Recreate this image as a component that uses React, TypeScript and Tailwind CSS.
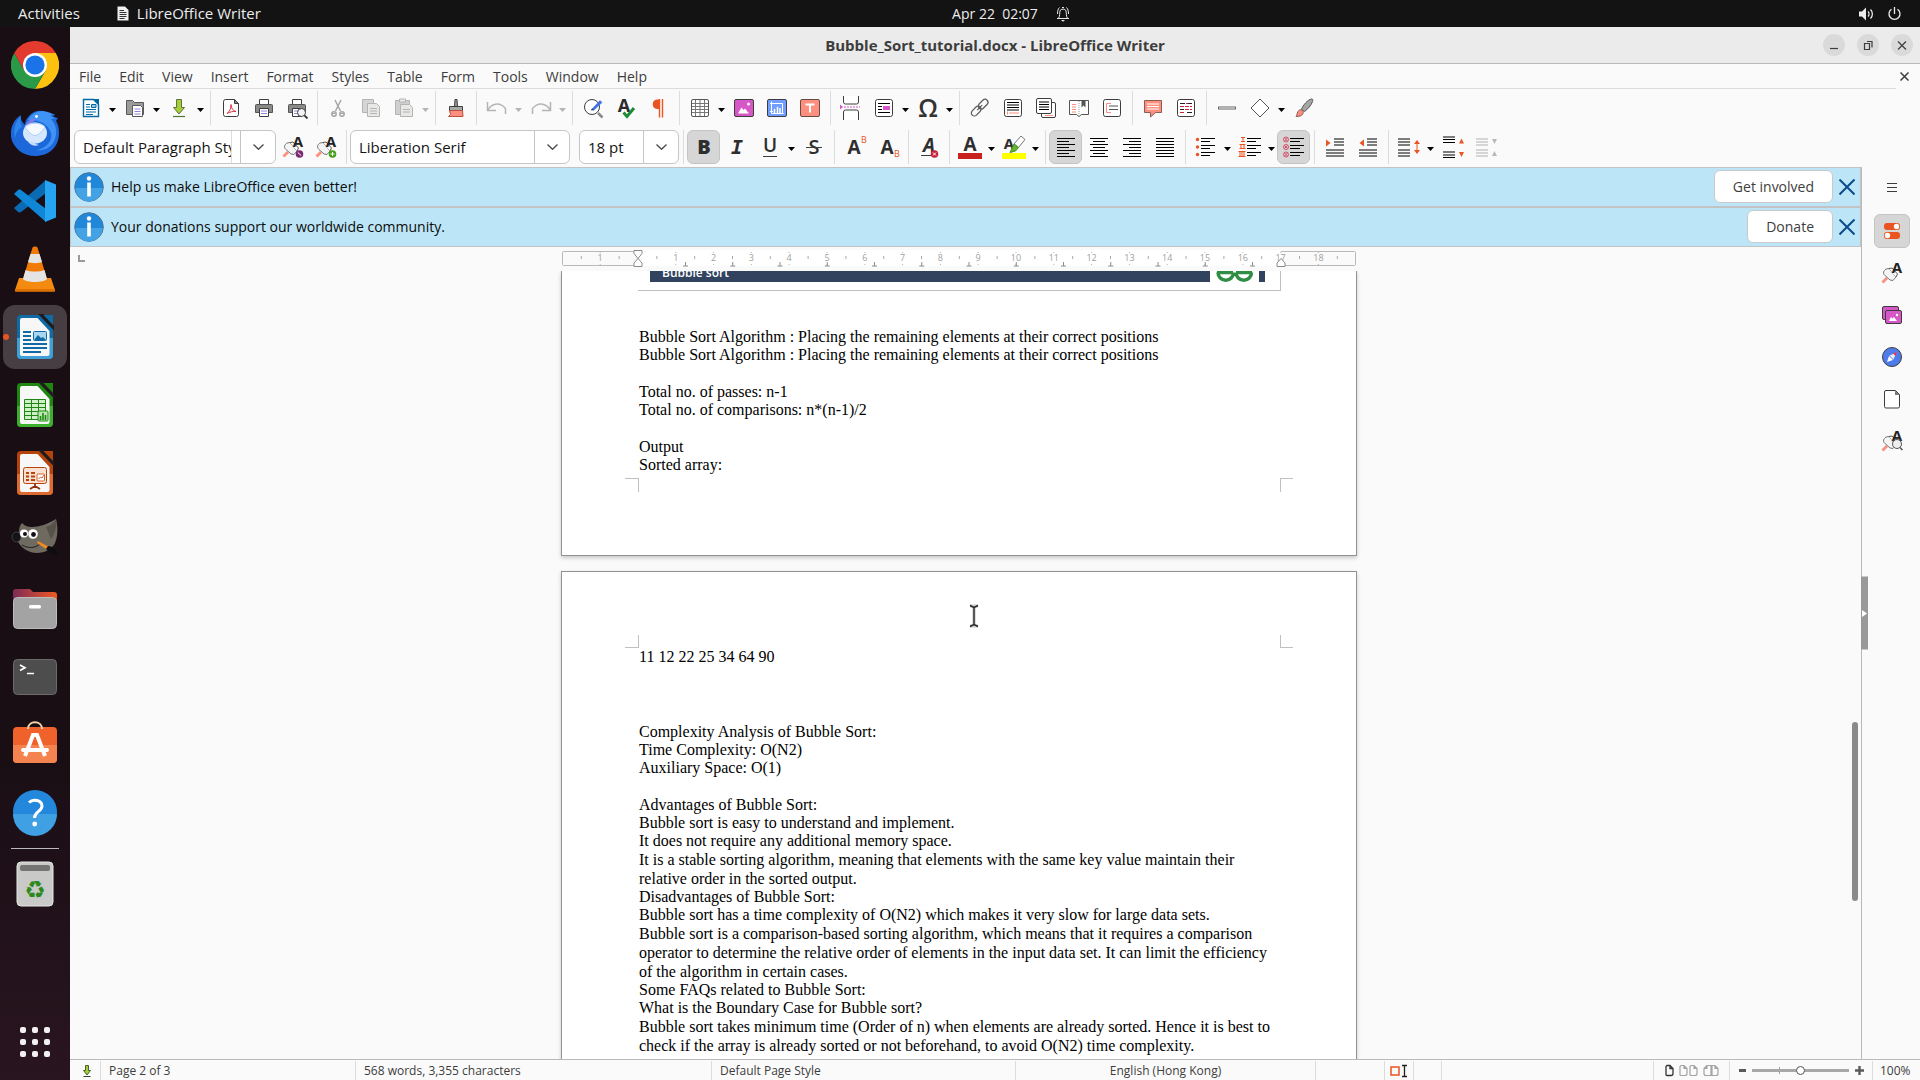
import { useState, type ReactNode } from "react";

const INK = "#3d3d3d";
const ORANGE = "#e95420";
const SALMON = "#fc8f7e";
const MAGENTA = "#d658c8";

function Glyph({ children, size = 24 }: { children: ReactNode; size?: number }) {
  return (
    <svg width={size} height={size} viewBox="0 0 24 24" fill="none" stroke={INK} className="overflow-visible" aria-hidden="true">
      {children}
    </svg>
  );
}

/* ---------- toolbar building blocks ---------- */

interface ToolProps {
  label: string;
  children: ReactNode;
  arrow?: boolean;
  active?: boolean;
  disabled?: boolean;
}

function Tool({ label, children, arrow, active, disabled }: ToolProps) {
  return (
    <div className="flex shrink-0">
      <button
        type="button"
        aria-label={label}
        aria-pressed={active}
        disabled={disabled}
        className={
          active
            ? "flex h-[34px] w-[33px] items-center justify-center rounded-md border border-[#c4c4c4] bg-[#d6d6d6]"
            : "flex h-[34px] w-[33px] items-center justify-center rounded-md"
        }
      >
        {children}
      </button>
      {arrow && (
        <button type="button" aria-label={`${label} options`} disabled={disabled} className="flex h-[34px] w-[11px] items-center justify-center pt-1">
          <svg width="7" height="4" viewBox="0 0 7 4" aria-hidden="true">
            <path d="M0 0h7L3.500 4z" fill={disabled ? "#b5b5b5" : "#000"} />
          </svg>
        </button>
      )}
    </div>
  );
}

function Sep() {
  return (
    <div className="flex w-2 shrink-0 justify-center">
      <div className="h-[34px] w-px bg-[#dcdcdc]" />
    </div>
  );
}

function Combo({ label, options, frame, pad, split }: { label: string; options: string[]; frame: string; pad: string; split?: boolean }) {
  return (
    <div className={`relative flex h-[34px] shrink-0 overflow-hidden rounded-md border border-[#c6c6c6] bg-white ${frame}`}>
      <select aria-label={label} className={`w-full appearance-none overflow-hidden bg-transparent pl-2 text-[15px] text-[#141414] outline-none ${pad}`}>
        {options.map((o) => (
          <option key={o}>{o}</option>
        ))}
      </select>
      {split && <div className="pointer-events-none absolute inset-y-0 right-[43px] w-px bg-[#dcdcdc]" />}
      <div className="pointer-events-none absolute inset-y-0 right-0 flex w-[35px] items-center justify-center border-l border-[#c6c6c6]">
        <svg width="11" height="6" viewBox="0 0 11 6" fill="none" stroke="#4a4a4a" aria-hidden="true">
          <path d="M.5.5 5.500 5.300 10.500.5" strokeWidth="1.300" />
        </svg>
      </div>
    </div>
  );
}

/* ---------- standard toolbar icons ---------- */

const NewDoc = () => (
  <Glyph>
    <path d="M4.500 3.500h10l5 5v12h-15z" fill="#fff" stroke="#0369a3" strokeWidth="1.400" />
    <path d="M14 3h6v6z" fill="#0369a3" stroke="none" />
    <path d="M7 8.500h4M7 11h4M7 13.500h10M7 16h10M7 18.500h7" stroke="#0369a3" />
    <path d="M12.500 8.500h4.500v3h-4.500z" fill="#8ecae6" stroke="#0369a3" />
  </Glyph>
);
const OpenDoc = () => (
  <Glyph>
    <path d="M3.500 18.500v-14h6l2 2h9v12z" fill="#9b9b99" stroke="#5a5a58" />
    <path d="M9.500 9.500h8l2 2v9h-10z" fill="#fff" stroke="#5a5a58" />
    <path d="M11.500 13h6M11.500 15.500h6M11.500 18h6" stroke="#8d86e0" />
  </Glyph>
);
const SaveDoc = () => (
  <Glyph>
    <path d="M9.500 3.500h5v8h3L12 18l-5.500-6.500h3z" fill="#a3cf3b" stroke="#63703c" />
    <path d="M6 20.500h12" stroke="#4f7a2a" strokeWidth="1.200" />
  </Glyph>
);
const PdfDoc = () => (
  <Glyph>
    <path d="M6.500 3.500h9l4 4v11a2 2 0 0 1-2 2h-11a2 2 0 0 1-2-2v-13a2 2 0 0 1 2-2z" fill="#fff" />
    <path d="M15.500 3.500v4h4z" fill="#8a8a8a" />
    <path d="M8 17.500c3-2 4-5.500 4-9M12 8.500c0 4 2.500 6.500 5 7-3-.5-6 .5-9 2" stroke="#dc2e3d" />
  </Glyph>
);
const Printer = ({ children }: { children?: ReactNode }) => (
  <Glyph>
    <path d="M7.500 8V3.500h9V8" fill="#fff" />
    <path d="M4.500 8.500h15a1 1 0 0 1 1 1v7h-17v-7a1 1 0 0 1 1-1z" fill="#8a8a88" stroke="#555" />
    <path d="M7.500 12.500h9v8h-9z" fill="#fff" />
    <path d="M9 15h6M9 17.500h6" stroke="#8d86e0" />
    {children}
  </Glyph>
);
const Cut = () => (
  <Glyph>
    <g stroke="#a6a6a4" strokeWidth="1.500">
      <path d="M9 4l5.500 11M15 4L9.500 15" />
      <path d="M5.500 17.500h4M14.500 17.500h4" strokeWidth="1" />
      <circle cx="8" cy="18" r="2.200" />
      <circle cx="16" cy="18" r="2.200" />
    </g>
  </Glyph>
);
const Copy = () => (
  <Glyph>
    <g stroke="#b4b4b2" fill="#e8e8e6">
      <path d="M3.500 3.500h11v13h-11z" fill="#d5d5d3" />
      <path d="M8.500 7.500h9l3 3v10h-12z" />
      <path d="M11 12.500h7M11 15h7M11 17.500h7" />
    </g>
  </Glyph>
);
const Paste = () => (
  <Glyph>
    <g stroke="#b4b4b2" fill="#e8e8e6">
      <path d="M3.500 4.500h14v14h-14z" fill="#cfcfcd" />
      <path d="M7.500 3h6v3h-6z" />
      <path d="M8.500 8.500h9l3 3v9h-12z" />
      <path d="M11 13.500h7M11 16h7" />
    </g>
  </Glyph>
);
const CloneFormat = () => (
  <Glyph>
    <path d="M10.500 10.500l.5-7h2l.5 7z" fill="#999" />
    <path d="M5.500 10.500h13v4h-13z" fill="#a8a8a6" />
    <path d="M5.500 14.500h13l.5 6H4.500l2-2z" fill={SALMON} stroke="#b6503f" />
  </Glyph>
);
const Undo = ({ flip }: { flip?: boolean }) => (
  <svg width="24" height="24" viewBox="0 0 24 24" fill="none" stroke="#b5b5b3" strokeWidth="1.500" className={flip ? "-scale-x-100" : ""} aria-hidden="true">
    <path d="M2.500 6v8.500h8.500M3 14C6 8 14 5 20.500 12.500V18" />
  </svg>
);
const Find = () => (
  <Glyph>
    <circle cx="11" cy="11" r="7.500" fill="#fff" />
    <path d="M17 17l4.500 4.500" strokeWidth="2.500" stroke="#8a8a8a" />
    <path d="M10.500 13.500L19 4.500l2 2-8.500 8z" fill="#3f6fe0" stroke="#3f6fe0" strokeWidth=".5" />
    <path d="M10 14.500l1-2 1.200 1.200z" fill="#222" stroke="none" />
  </Glyph>
);
const Spelling = () => (
  <Glyph>
    <text x="10" y="16" textAnchor="middle" fontSize="18" fontWeight="700" fontFamily="Open Sans" fill="#2b2b2b" stroke="none">A</text>
    <path d="M9.500 16.500l3.500 4 7-8.500" stroke="#1c8b36" strokeWidth="3" />
  </Glyph>
);
const Pilcrow = () => (
  <Glyph>
    <path d="M12.500 3.500h-2.500a5 4.800 0 0 0 0 9.500h2.500z" fill={ORANGE} stroke="none" />
    <path d="M12.500 3v18.500M15.500 3v18.500" stroke={ORANGE} strokeWidth="1.400" />
  </Glyph>
);
const TableIcon = () => (
  <Glyph>
    <rect x="3.500" y="3.500" width="17" height="17" rx="1.500" fill="#fff" stroke="#555" />
    <path d="M4 7.500h16M4 10.500h16M4 13.500h16M4 16.500h16M7.500 4v16M12 4v16M16.500 4v16" stroke="#777" />
  </Glyph>
);
const ImageIcon = () => (
  <Glyph>
    <rect x="2.500" y="3.500" width="19" height="17" rx="1.500" fill={MAGENTA} />
    <path d="M6 17.500l3.500-6 2 2.500 1.500-1.500 4 5z" fill="#fff" stroke="none" />
    <circle cx="16.500" cy="8" r="1.500" fill="#fff" stroke="none" />
  </Glyph>
);
const ChartIcon = () => (
  <Glyph>
    <rect x="2.500" y="3.500" width="19" height="17" rx="1.500" fill="#729fff" />
    <path d="M6.500 5.500v12h12M5 7.500h12.500v10M5 15.500h3" stroke="#fff" />
    <path d="M9.500 17v-4M12.500 17v-6M15 17v-5" stroke="#fff" strokeWidth="1.500" />
  </Glyph>
);
const TextBoxIcon = () => (
  <Glyph>
    <rect x="2.500" y="3.500" width="19" height="17" rx="1.500" fill={SALMON} stroke="#6a4a45" />
    <path d="M7.500 8.500h9M12 9v7.500" stroke="#fff" strokeWidth="2" />
  </Glyph>
);
const PageBreak = () => (
  <Glyph>
    <path d="M4.500 0v6a2 2 0 0 0 2 2h11a2 2 0 0 0 2-2V0M4.500 24v-8a2 2 0 0 1 2-2h11a2 2 0 0 1 2 2v8" fill="#fff" />
    <path d="M5 11h16" stroke={MAGENTA} strokeDasharray="2 1" />
    <path d="M1 8.500l3 2.500-3 2.500z" fill={MAGENTA} stroke="none" />
  </Glyph>
);
const Sheet = ({ children }: { children: ReactNode }) => (
  <Glyph>
    <rect x="3.500" y="3.500" width="17" height="17" rx="2" fill="#fff" />
    {children}
  </Glyph>
);
const LinkIcon = () => (
  <Glyph>
    <g transform="rotate(-45 12 12)" stroke="#5a5a5a" strokeWidth="1.200">
      <rect x="1.500" y="8.500" width="11" height="6" rx="3" />
      <rect x="11.500" y="8.500" width="11" height="6" rx="3" />
      <path d="M8.500 11.500h7" />
    </g>
  </Glyph>
);
const Endnote = () => (
  <Glyph>
    <rect x="7.500" y="6.500" width="14" height="15" rx="1.500" fill="#fff" />
    <rect x="2.500" y="2.500" width="15" height="15" rx="1.500" fill="#fff" />
    <path d="M5 6h10M5 8.500h10M5 11h10M5 13.500h10" stroke="#000" />
    <path d="M11 19.500h8" stroke={SALMON} />
  </Glyph>
);
const Bookmark = () => (
  <Glyph>
    <path d="M2.500 4.500h19v14h-7L12 20.500l-2.500-2h-7z" fill="#fff" stroke="#555" />
    <path d="M12 5v14" stroke="#999" strokeDasharray="1 1" />
    <path d="M14.500 4.500h4v7l-2-2-2 2z" fill="#555" stroke="none" />
    <path d="M5 8.500h4M5 11h4M5 13.500h4M5 16h4" stroke={SALMON} />
  </Glyph>
);
const CommentIcon = () => (
  <Glyph>
    <path d="M3.500 4.500h17v12h-6l-5 4.500v-4.500h-6z" fill={SALMON} stroke="#8b5c55" />
    <path d="M6 8h12M6 10.500h12M6 13h12" stroke="#fff" />
  </Glyph>
);
const DrawBrush = () => (
  <Glyph>
    <path d="M9.500 13.500C11 9 16 3.500 19.500 3c1.500 0 1.500 1 1 2.500-1 3.500-5 8-8 10z" fill="#a5a5a3" stroke="#555" />
    <path d="M4 20.500c1.500-1 .5-5 3.500-6.500 2-1 4.500 1 3.500 3.500-1 2.500-4 3-7 3z" fill={SALMON} stroke="#8b5c55" />
  </Glyph>
);

/* ---------- formatting toolbar icons ---------- */

const StyleBrush = ({ children }: { children?: ReactNode }) => (
  <Glyph>
    <path d="M2.500 21.500L7 17" stroke={SALMON} strokeWidth="2.800" />
    <path d="M5 14.500c-2.500-2-1.500-5 1-6.500l3-.5 7 8.500-3 3.500-3-.5z" fill="#f4f4f4" stroke="#777" />
    <path d="M9 7.500l3-.5 5.500 6-1.500 3" fill="#fff" stroke="#555" />
    <text x="17" y="12" textAnchor="middle" fontSize="15" fontWeight="700" fontFamily="Open Sans" fill="#222" stroke="none">A</text>
    {children}
  </Glyph>
);
const Letter = ({ ch, cls, children }: { ch: string; cls: string; children?: ReactNode }) => (
  <Glyph>
    <text x="12" y="19" textAnchor="middle" fontSize="20" className={cls} fill="#2e2e2e" stroke="none">
      {ch}
    </text>
    {children}
  </Glyph>
);
const Lines = ({ rows }: { rows: number[][] }) => (
  <Glyph>
    <path d={rows.map(([x, y, w]) => `M${x} ${y}h${w}`).join("")} stroke="#000" strokeWidth="1.200" />
  </Glyph>
);
const alignYs = [3.5, 6.5, 9.5, 12.5, 15.5, 18.5, 21.5];
const leftRows = alignYs.map((y, i) => [3, y, i % 2 ? 12 : 18]);
const centerRows = alignYs.map((y, i) => (i % 2 ? [6, y, 12] : [3, y, 18]));
const rightRows = alignYs.map((y, i) => (i % 2 ? [9, y, 12] : [3, y, 18]));
const fullRows = alignYs.map((y) => [3, y, 18]);

const Bullets = () => (
  <Glyph>
    <g fill={ORANGE} stroke="none">
      <circle cx="3.500" cy="4.500" r="1.700" />
      <circle cx="3.500" cy="12" r="1.700" />
      <circle cx="3.500" cy="19.500" r="1.700" />
    </g>
    <path d="M7 3.500h14M7 6.500h9M7 10.500h14M7 13.500h9M7 17.500h14M7 20.500h9" stroke="#000" strokeWidth="1.200" />
  </Glyph>
);
const Numbers = () => (
  <Glyph>
    <path d="M3 2.500h4M5 2.500v4M3 6.500h4M1.500 9.500h6M3 9.500v4M6 9.500v4M1.500 13.500h6M.5 16.500h7M2 16.500v5M4 16.500v5M6 16.500v5M.5 21.500h7" stroke={ORANGE} />
    <path d="M9 3.500h14M9 6.500h9M9 10.500h14M9 13.500h9M9 17.500h14M9 20.500h9" stroke="#000" strokeWidth="1.200" />
  </Glyph>
);
const NoList = () => (
  <Glyph>
    {[4.5, 12, 19.5].map((y) => (
      <g key={y} stroke="#d4506a">
        <circle cx="4" cy={y} r="2.500" />
        <path d={`M2.500 ${y - 1.5}l3 3m0-3l-3 3`} />
      </g>
    ))}
    <path d="M8 3.500h14M8 6.500h10M8 10.500h14M8 13.500h10M8 17.500h14M8 20.500h10" stroke="#000" strokeWidth="1.200" />
  </Glyph>
);
const Indent = ({ out }: { out?: boolean }) => (
  <Glyph>
    <path d="M11 4h10M11 7h10M11 10h10M3 15h18M3 18h18M3 21h18" stroke="#000" strokeWidth="1.200" />
    <path d={out ? "M8 4.500L3.500 8 8 11.500z" : "M3 4.500L7.500 8 3 11.500z"} fill={ORANGE} stroke="none" />
  </Glyph>
);
const LineSpacing = () => (
  <Glyph>
    <path d="M1 4h12M1 7h12M1 10h12M1 15h12M1 18h12M1 21h12" stroke="#000" strokeWidth="1.200" />
    <path d="M20 6v12" stroke={ORANGE} />
    <path d="M17 9l3-4 3 4zM17 15l3 4 3-4z" fill={ORANGE} stroke="none" />
  </Glyph>
);
const ParaSpacing = ({ dec }: { dec?: boolean }) => (
  <Glyph>
    <path
      d={dec ? "M2 4h12M2 7h12M2 10h12M2 15h12M2 18h12M2 21h12" : "M2 2h12M2 4.500h12M2 7.500h12M2 17h12M2 20h12M2 22.500h12"}
      stroke={dec ? "#b0b0b0" : "#000"}
      strokeWidth="1.200"
    />
    <path
      d={dec ? "M18 4h5l-2.500 5zM18 21h5l-2.500-5z" : "M18 8.500h5L20.500 3.500zM18 17h5l-2.500 5z"}
      fill={dec ? "#b8b8b8" : ORANGE}
      stroke="none"
    />
  </Glyph>
);

/* ---------- dock ---------- */

const OfficeFile = ({ dark, light, children }: { dark: string; light: string; children: ReactNode }) => (
  <svg width="48" height="48" viewBox="0 0 48 48" aria-hidden="true">
    <path d="M10 2h20l12 12v28a4 4 0 0 1-4 4H10a4 4 0 0 1-4-4V6a4 4 0 0 1 4-4z" fill={dark} />
    <path d="M6 25h36v17a4 4 0 0 1-4 4H10a4 4 0 0 1-4-4z" fill={light} />
    <path d="M11 5h15.500L38.500 18v23a2 2 0 0 1-2 2H11a2 2 0 0 1-2-2V7a2 2 0 0 1 2-2z" fill="#f7f7f7" />
    <path d="M27 1h5.500L43 12.500v5z" fill="#1f1a1e" />
    <path d="M32.500 2H42v10z" fill={dark} />
    {children}
  </svg>
);

const dockApps: { name: string; icon: ReactNode; active?: boolean }[] = [
  {
    name: "Google Chrome",
    icon: (
      <svg width="48" height="48" viewBox="0 0 48 48" aria-hidden="true">
        <path d="M24 12h20.800A24 24 0 0 1 24 48l10.400-18z" fill="#fdc10f" />
        <path d="M13.600 30L3.200 12A24 24 0 0 0 24 48l10.400-18z" fill="#2a9a48" />
        <path d="M24 12h20.800A24 24 0 0 0 3.200 12l10.400 18z" fill="#e33b2e" />
        <circle cx="24" cy="24" r="12" fill="#fff" />
        <circle cx="24" cy="24" r="9.600" fill="#1a73e8" />
      </svg>
    ),
  },
  {
    name: "Thunderbird",
    icon: (
      <svg width="48" height="48" viewBox="0 0 48 48" aria-hidden="true">
        <path d="M10 6C2 11-1 20 0 28c2 11 12 19 24 19 14 0 24-9 24-23 0-5-1-9-3-12l2-3-5-1 2-3-6 0C32 0 23 1 18 7c-3 3-4 6-4 9-3-3-5-6-4-10z" fill="#1c68da" />
        <path d="M17 11c3-6 9-9 15-9 6 1 8 2 10 3l-3 2 6 2-5 1c6 6 7 16 2 24-4 6-11 8-16 7 10-2 16-10 14-17-2-8-11-14-23-13z" fill="#3f93f5" />
        <path d="M15 15c2-4 6-6 11-5-4 2-6 5-6 8l-6 4c-1-2-1-5 1-7z" fill="#7f7ae6" />
        <path d="M10 7C4 13 2 21 4 29c1-5 3-9 7-11-2-3-2-7-1-11z" fill="#2f86ee" />
        <ellipse cx="24" cy="24" rx="12" ry="10.500" fill="#d4e7ff" />
        <path d="M14 18c3 5 7 8.500 10 8.500S31 23 34 18c-5-5-15-5-20 0z" fill="#f4f9ff" stroke="#a9cdf7" />
        <path d="M17 33c3 3.500 7 4.500 11 3-3-.5-4-1.500-5-3z" fill="#c6dcff" />
        <circle cx="25.500" cy="7.500" r="1.400" fill="#fff" />
      </svg>
    ),
  },
  {
    name: "Visual Studio Code",
    icon: (
      <svg width="48" height="48" viewBox="0 0 48 48" aria-hidden="true">
        <path d="M35 3L3 31l4 4c1 .6 2 .6 3 0l25-19z" fill="#0a6ab4" />
        <path d="M3 17l4-4c1-.6 2-.6 3 0l25 19v13z" fill="#0f86d6" />
        <path d="M34 3l11 4.500v33L34 45z" fill="#26a4f2" />
      </svg>
    ),
  },
  {
    name: "VLC media player",
    icon: (
      <svg width="48" height="48" viewBox="0 0 48 48" aria-hidden="true">
        <path d="M8 33h32l4 12a1 1 0 0 1-1 1.500H5A1 1 0 0 1 4 45z" fill="#f58a10" />
        <path d="M4 44h40v2.500H4z" fill="#e07000" />
        <path d="M21.500 2.500c1-1.500 4-1.500 5 0L36 34c-2 4-22 4-24 0z" fill="#f07a05" />
        <path d="M19.500 9h9l2.500 8c-3 1.500-11 1.500-14 0zM14.500 25c5 2 14 2 19 0l2.500 9c-2 4-22 4-24 0z" fill="#e4e4e4" />
      </svg>
    ),
  },
  {
    name: "LibreOffice Writer",
    active: true,
    icon: (
      <OfficeFile dark="#0e6ba5" light="#3fa0d8">
        <path d="M12 19h8M12 23h8M12 27h8M12 31h24M12 35h24M12 39h18" stroke="#0e6ba5" strokeWidth="2" />
        <rect x="22.500" y="18.500" width="13" height="9" rx="1" fill="#a8d5f0" stroke="#0e6ba5" />
        <path d="M23 27l4-5 3 3 2-1 3 3z" fill="#0e6ba5" />
      </OfficeFile>
    ),
  },
  {
    name: "LibreOffice Calc",
    icon: (
      <OfficeFile dark="#208612" light="#3cb02c">
        <path d="M13.500 18.500h21v20h-21zM13.500 22.500h21M13.500 26.500h21M13.500 30.500h21M13.500 34.500h21M20.500 18.500v20M27.500 18.500v20" fill="#ceefc8" stroke="#208612" />
        <rect x="27" y="30" width="10" height="10" rx="1" fill="#b9e8b0" stroke="#208612" />
        <path d="M29.500 39v-4M32 39v-7M34.500 39v-5" stroke="#208612" strokeWidth="1.600" />
      </OfficeFile>
    ),
  },
  {
    name: "LibreOffice Impress",
    icon: (
      <OfficeFile dark="#b5430a" light="#dc6a31">
        <rect x="12.500" y="18.500" width="23" height="16" rx="2" fill="#fae0d2" stroke="#b5430a" />
        <path d="M15 24h3M20 24h4M15 27.500h3M20 27.500h4M15 31h3M20 31h4" stroke="#b5430a" strokeWidth="1.800" />
        <rect x="26" y="25" width="7.500" height="7" rx="1" fill="#fff" stroke="#d2622b" />
        <path d="M27.500 30l2-2 1.500 1 2-3" stroke="#d2622b" fill="none" />
        <path d="M24 35v2l-5 3M24 37l5 3" stroke="#8f3306" strokeWidth="1.800" fill="none" />
      </OfficeFile>
    ),
  },
  {
    name: "GIMP",
    icon: (
      <svg width="48" height="48" viewBox="0 0 48 48" aria-hidden="true">
        <path d="M8 15c0-4 1-7 3-9 3 3 6 4 10 4 7 0 16-3 24-8 2 8 2 17-1 24-3 6-10 10-18 10-9 0-17-6-20-13z" fill="#6f6a60" />
        <path d="M45 2c-2 4-6 7-10 8l5 12c4-5 6-12 5-20z" fill="#56524a" />
        <ellipse cx="5.500" cy="20" rx="4.500" ry="5" fill="#141418" stroke="#55555a" strokeWidth=".6" />
        <circle cx="13" cy="16.500" r="4" fill="#fff" />
        <circle cx="22" cy="17" r="4.800" fill="#fff" />
        <circle cx="14" cy="17" r="2" fill="#111" />
        <circle cx="22.500" cy="17.500" r="2.400" fill="#111" />
        <path d="M11 28c7 4 13 3 18-1" stroke="#222" fill="none" />
        <path d="M27 24l13 7-2 3-12-8z" fill="#f08a24" />
        <path d="M37 29c4 0 8 3 10 9-5-1-9-2-12-6z" fill="#0e0e0e" />
      </svg>
    ),
  },
  {
    name: "Files",
    icon: (
      <svg width="48" height="48" viewBox="0 0 48 48" aria-hidden="true">
        <defs>
          <linearGradient id="folder">
            <stop offset="0" stopColor="#7d2a58" />
            <stop offset="1" stopColor="#f05a22" />
          </linearGradient>
        </defs>
        <path d="M5 4h14l3 3h21a3 3 0 0 1 3 3v12H2V7a3 3 0 0 1 3-3z" fill="url(#folder)" />
        <rect x="2.500" y="12.500" width="43" height="31" rx="4" fill="#a3a3a3" stroke="#bcbcbc" />
        <rect x="18" y="20" width="12" height="3.500" rx="1.500" fill="#fff" />
      </svg>
    ),
  },
  {
    name: "Terminal",
    icon: (
      <svg width="48" height="48" viewBox="0 0 48 48" aria-hidden="true">
        <rect x="2.500" y="6.500" width="43" height="35" rx="4" fill="#4d4d4d" stroke="#6b6b6b" />
        <path d="M9 12l5 2.800-5 2.800M16 20.500h7" stroke="#fff" strokeWidth="1.700" fill="none" />
      </svg>
    ),
  },
  {
    name: "Ubuntu Software",
    icon: (
      <svg width="48" height="48" viewBox="0 0 48 48" aria-hidden="true">
        <rect x="2" y="6" width="44" height="36" rx="4" fill="#f0622b" />
        <path d="M2 24h44v14a4 4 0 0 1-4 4H6a4 4 0 0 1-4-4z" fill="#f58350" />
        <path d="M17 8c0-9 14-9 14 0" stroke="#f3d6a8" strokeWidth="2" fill="none" />
        <path d="M14 35l8-21h4l8 21M12 29h24" stroke="#fff" strokeWidth="4" fill="none" />
        <path d="M12 29h24" stroke="#fff" strokeWidth="4" strokeLinecap="round" />
      </svg>
    ),
  },
  {
    name: "Help",
    icon: (
      <svg width="48" height="48" viewBox="0 0 48 48" aria-hidden="true">
        <circle cx="24" cy="23" r="22" fill="#2388dc" />
        <path d="M2 25a22 22 0 0 0 44 0z" fill="#3fa0e4" />
        <path d="M18 13.500c4-4 13-2.500 13 3.500 0 5.500-7.500 5.500-7.500 12" stroke="#fff" strokeWidth="3" fill="none" />
        <circle cx="23.700" cy="35" r="2.400" fill="#fff" />
      </svg>
    ),
  },
];

function Dock() {
  return (
    <nav aria-label="Dock" className="flex w-[70px] shrink-0 flex-col bg-linear-to-b from-[#1a0e15] from-70% to-[#29151f] py-1">
      {dockApps.map((app) => (
        <div key={app.name} className="relative flex h-[68px] shrink-0 items-center justify-center">
          {app.active && <span className="absolute left-[3px] size-[6px] rounded-full bg-[#e95420]" />}
          <button
            type="button"
            aria-label={app.name}
            className={app.active ? "flex size-16 items-center justify-center rounded-xl bg-white/20" : "flex size-16 items-center justify-center"}
          >
            {app.icon}
          </button>
        </div>
      ))}
      <div className="mx-[11px] my-px h-px shrink-0 bg-[#bdb8bb]" />
      <button type="button" aria-label="Trash" className="flex h-[68px] shrink-0 items-center justify-center">
        <svg width="48" height="48" viewBox="0 0 48 48" className="overflow-visible" aria-hidden="true">
          <rect x="6" y="2" width="36" height="44" rx="4" fill="#c9c9c7" stroke="#e6e6e6" />
          <rect x="9" y="5" width="30" height="6" rx="2" fill="#757573" />
          <text x="24" y="38" textAnchor="middle" fontSize="24" fontFamily="DejaVu Sans" fill="#2c8a1c">♻</text>
        </svg>
      </button>
      <button type="button" aria-label="Show Applications" className="mt-auto flex h-[68px] shrink-0 items-center justify-center">
        <span className="grid grid-cols-3 gap-1.5">
          {Array.from({ length: 9 }, (_, i) => (
            <span key={i} className="size-[6px] rounded-[2px] bg-[#f2f0f1]" />
          ))}
        </span>
      </button>
    </nav>
  );
}

/* ---------- ruler ---------- */

const CM = 37.8;
const ZERO = 77;

function Ruler() {
  const labels = Array.from({ length: 20 }, (_, i) => i - 1).filter((n) => n !== 0);
  return (
    <svg width="796" height="24" viewBox="0 0 796 24" className="block" aria-label="Ruler">
      <rect x="1.500" y="4.500" width="793" height="14" rx="1" fill="#fafafa" stroke="#b9b9b9" />
      <rect x={ZERO} y="3" width="643" height="16" fill="#fff" />
      {labels.map((n) => (
        <g key={n}>
          {n < 19 && (
            <text x={ZERO + n * CM} y="14" textAnchor="middle" fontSize="9" fontFamily="Open Sans" fill="#a0a0a0">
              {Math.abs(n)}
            </text>
          )}
          {n < 19 && <path d={`M${ZERO + n * CM} 5v1m0 11v1`} stroke="#b5b5b5" />}
          {n < 19 && <path d={`M${ZERO + (n + (n < 0 ? -0.5 : 0.5)) * CM} 9v3`} stroke="#a8a8a8" />}
        </g>
      ))}
      <path d={`M${ZERO - CM / 2} 9v3M${ZERO + CM / 2} 9v3`} stroke="#a8a8a8" />
      {Array.from({ length: 13 }, (_, i) => 124.5 + i * 47.25).map((x) => (
        <path key={x} d={`M${x} 15v4M${x - 2.5} 19h5`} stroke="#8c8c8c" />
      ))}
      <path d="M73 3.500h8v3L77 11.500 73 6.500zM77 11.500l4 4.500v3.500h-8V16z" fill="#fff" stroke="#8a8a8a" />
      <path d="M720 11.500l4 4.500v3.500h-8V16z" fill="#fff" stroke="#8a8a8a" />
    </svg>
  );
}

/* ---------- document ---------- */

const firstPage = [
  "Bubble Sort Algorithm : Placing the remaining elements at their correct positions",
  "Bubble Sort Algorithm : Placing the remaining elements at their correct positions",
  "",
  "Total no. of passes: n-1",
  "Total no. of comparisons: n*(n-1)/2",
  "",
  "Output",
  "Sorted array:",
];

const secondPage = [
  "11 12 22 25 34 64 90",
  "",
  "",
  "",
  "Complexity Analysis of Bubble Sort:",
  "Time Complexity: O(N2)",
  "Auxiliary Space: O(1)",
  "",
  "Advantages of Bubble Sort:",
  "Bubble sort is easy to understand and implement.",
  "It does not require any additional memory space.",
  "It is a stable sorting algorithm, meaning that elements with the same key value maintain their\nrelative order in the sorted output.",
  "Disadvantages of Bubble Sort:",
  "Bubble sort has a time complexity of O(N2) which makes it very slow for large data sets.",
  "Bubble sort is a comparison-based sorting algorithm, which means that it requires a comparison\noperator to determine the relative order of elements in the input data set. It can limit the efficiency\nof the algorithm in certain cases.",
  "Some FAQs related to Bubble Sort:",
  "What is the Boundary Case for Bubble sort?",
  "Bubble sort takes minimum time (Order of n) when elements are already sorted. Hence it is best to\ncheck if the array is already sorted or not beforehand, to avoid O(N2) time complexity.",
];

function Paragraphs({ items }: { items: string[] }) {
  return (
    <div className="pl-[77px] font-['Liberation_Serif',serif] text-[16px] text-black">
      {items.map((t, i) => {
        if (!t) return <div key={i} className="h-[19px]" />;
        return (
          <p key={i} className={t.includes("\n") ? "leading-[19px] whitespace-pre" : "leading-[18px] whitespace-pre"}>
            {t}
          </p>
        );
      })}
    </div>
  );
}

function Pages() {
  return (
    <div className="flex min-h-0 flex-1 flex-col items-center gap-[15px] overflow-hidden">
      <article className="w-[796px] shrink-0 border-x border-b border-[#929292] bg-white pb-[63px] shadow-[0_2px_4px_rgba(0,0,0,0.2)]">
        <div className="mr-[75px] mb-[37px] ml-[76px] flex h-5 items-start border-r border-b border-[#c0c0c0] pr-[15px] pl-3">
          <div className="flex h-[11px] flex-1 items-end overflow-hidden bg-[#31435f] pl-3 font-['Open_Sans',sans-serif] text-[12px] leading-[19px] font-semibold text-white">
            Bubble sort
          </div>
          <svg width="49" height="11" viewBox="0 0 49 11" fill="none" stroke="#2f8d46" strokeWidth="3.500" aria-hidden="true">
            <path d="M7 1.500h16M8 1.500a7.500 7.500 0 0 0 15.500 0M26 1.500h16M26 1.500a7.500 7.500 0 0 0 15.500 0" />
          </svg>
          <div className="h-[11px] w-[6px] bg-[#31435f]" />
        </div>
        <Paragraphs items={firstPage} />
        <div className="mt-1 flex justify-between px-[63px]">
          <div className="h-[14px] w-[14px] border-t border-r border-[#c0c0c0]" />
          <div className="h-[14px] w-[13px] border-t border-l border-[#c0c0c0]" />
        </div>
      </article>
      <article className="relative w-[796px] shrink-0 border border-[#929292] bg-white pt-[63px] pb-20 shadow-[0_2px_4px_rgba(0,0,0,0.2)]">
        <div className="flex justify-between px-[63px]">
          <div className="h-[13px] w-[14px] border-r border-b border-[#c0c0c0]" />
          <div className="h-[13px] w-[13px] border-b border-l border-[#c0c0c0]" />
        </div>
        <Paragraphs items={secondPage} />
        <svg width="10" height="24" viewBox="0 0 10 24" fill="none" className="absolute top-8 left-[407px]" aria-hidden="true">
          <path d="M1 2h8M1 22h8M5 2v20" stroke="#d5d5d5" strokeWidth="3.500" />
          <path d="M1 1.500l4 2 4-2M1 22.500l4-2 4 2M5 3v18" stroke="#222" strokeWidth="1.400" />
        </svg>
      </article>
    </div>
  );
}

/* ---------- info bars ---------- */

function InfoBar({ text, action }: { text: string; action: string }) {
  const [open, setOpen] = useState(true);
  if (!open) return null;
  return (
    <div className="flex h-10 shrink-0 items-center border border-[#c3c3c3] bg-[#bce5f7] pr-[3px] pb-px pl-[3px]">
      <svg width="30" height="32" viewBox="0 0 30 32" aria-hidden="true">
        <circle cx="15" cy="16" r="14.300" fill="#2187d9" stroke="#4b7597" />
        <path d="M1.500 17a13.500 13.500 0 0 0 27 0z" fill="#43a2e3" />
        <circle cx="15" cy="7.500" r="2.200" fill="#fff" />
        <path d="M15 11.500v14" stroke="#fff" strokeWidth="3.600" />
      </svg>
      <span className="ml-[7px] text-[14px] text-[#0c0c0c]">{text}</span>
      <button type="button" className="ml-auto h-[33px] rounded-md border border-[#c9c9c9] bg-white px-[18px] text-[14px] text-[#3d3d3d]">
        {action}
      </button>
      <button type="button" aria-label="Close" onClick={() => setOpen(false)} className="flex w-6 justify-center pl-1">
        <svg width="16" height="16" viewBox="0 0 16 16" stroke="#0a4b8c" strokeWidth="2" aria-hidden="true">
          <path d="M.5.5l15 15M15.500.5l-15 15" />
        </svg>
      </button>
    </div>
  );
}

/* ---------- sidebar ---------- */

const decks: { name: string; icon: ReactNode; active?: boolean }[] = [
  {
    name: "Properties",
    active: true,
    icon: (
      <Glyph>
        <rect x="4" y="4" width="16" height="7" rx="3" fill={ORANGE} stroke="none" />
        <rect x="4" y="13" width="16" height="7" rx="3" fill={ORANGE} stroke="none" />
        <circle cx="16.500" cy="7.500" r="2.700" fill="#fff" stroke="none" />
        <circle cx="7.500" cy="16.500" r="2.700" fill="#fff" stroke="none" />
      </Glyph>
    ),
  },
  { name: "Styles", icon: <StyleBrush /> },
  {
    name: "Gallery",
    icon: (
      <Glyph>
        <rect x="2.500" y="3.500" width="16" height="13" rx="1.500" fill={MAGENTA} />
        <rect x="5.500" y="7.500" width="16" height="13" rx="1.500" fill={MAGENTA} />
        <path d="M9 18l2-4 1.500 1.500L14 14l3 4z" fill="#fff" stroke="none" />
        <circle cx="17" cy="12" r="1.200" fill="#fff" stroke="none" />
      </Glyph>
    ),
  },
  {
    name: "Navigator",
    icon: (
      <Glyph>
        <circle cx="12" cy="12" r="9.500" fill="#4c7cec" />
        <path d="M7 17l2-6 4 4z" fill="#fff" stroke="none" />
        <path d="M16.500 7.500l-3 7-4-4z" fill="#e8e8f0" stroke="none" />
        <path d="M17 7l-1.500 4-2.500-2.500z" fill="#e8344a" stroke="none" />
      </Glyph>
    ),
  },
  {
    name: "Page",
    icon: (
      <Glyph>
        <path d="M6 3.500h9.500l4 4v12a1.500 1.500 0 0 1-1.500 1.500H6A1.500 1.500 0 0 1 4.500 19.500V5A1.500 1.500 0 0 1 6 3.500z" fill="#fff" />
        <path d="M15 3.500v4.500h4.500z" fill="#777" stroke="none" />
      </Glyph>
    ),
  },
  {
    name: "Style Inspector",
    icon: (
      <StyleBrush>
        <circle cx="17" cy="15" r="4.500" fill="#eee" stroke="#555" />
        <path d="M20 18.500l2.500 2.500" stroke="#555" strokeWidth="1.500" />
      </StyleBrush>
    ),
  },
];

function Sidebar() {
  return (
    <aside className="relative flex w-[59px] shrink-0 flex-col items-center border-l border-[#b9b9b9] pt-[3px] pl-[2px]">
      <button type="button" aria-label="Sidebar settings" className="flex h-[34px] w-9 items-center justify-center">
        <svg width="10" height="9" viewBox="0 0 10 9" stroke="#3d3d3d" aria-hidden="true">
          <path d="M0 .5h10M0 4.500h10M0 8.500h10" />
        </svg>
      </button>
      <div className="mt-[10px] flex flex-col gap-2">
        {decks.map((d) => (
          <button
            key={d.name}
            type="button"
            aria-label={d.name}
            className={
              d.active
                ? "flex h-[34px] w-9 items-center justify-center rounded-md border border-[#c4c4c4] bg-[#d6d6d6]"
                : "flex h-[34px] w-9 items-center justify-center"
            }
          >
            {d.icon}
          </button>
        ))}
      </div>
      <button type="button" aria-label="Hide sidebar" className="absolute top-1/2 -left-px flex h-[73px] w-[7px] -translate-y-1/2 items-center bg-[#999]">
        <svg width="7" height="8" viewBox="0 0 7 8" aria-hidden="true">
          <path d="M1 .5v7L6 4z" fill="#fff" />
        </svg>
      </button>
    </aside>
  );
}

/* ---------- status bar ---------- */

function StatusBar() {
  const [zoom, setZoom] = useState(50);
  const cell = "flex h-full items-center border-l border-[#dcdcdc]";
  return (
    <footer className="flex h-[21px] shrink-0 items-center border-t border-[#b9b9b9] pt-px text-[12px] text-[#3d3d3d]">
      <div className="flex w-[30px] shrink-0 justify-center pl-1">
        <Glyph size={12}>
          <path d="M9 1h6v10h4l-7 9-7-9h4z" fill="#a3cf3b" stroke="#4f5f2a" strokeWidth="2" />
          <path d="M5 23h14" strokeWidth="2" />
        </Glyph>
      </div>
      <div className={`${cell} w-[255px] pl-2`}>Page 2 of 3</div>
      <div className={`${cell} w-[356px] pl-2`}>568 words, 3,355 characters</div>
      <div className={`${cell} w-[304px] pl-2`}>Default Page Style</div>
      <div className={`${cell} w-[300px] justify-center`}>English (Hong Kong)</div>
      <div className={`${cell} w-[69px]`} />
      <div className={`${cell} w-[29px] justify-center`}>
        <svg width="18" height="14" viewBox="0 0 18 14" fill="none" aria-hidden="true">
          <rect x="1" y="3" width="8" height="8" stroke={ORANGE} strokeWidth="1.500" />
          <path d="M12 1.500h5M12 12.500h5M14.500 2v10" stroke="#222" strokeWidth="1.300" />
        </svg>
      </div>
      <div className={`${cell} w-[28px]`} />
      <div className={`${cell} flex-1`} />
      <div className={`${cell} w-[76px] justify-center`}>
        <svg width="54" height="13" viewBox="0 0 54 13" fill="none" aria-hidden="true">
          <path d="M2 1.500h3l3 3v5a2 2 0 0 1-2 2H2a1 1 0 0 1-1-1v-8zM5 1.500v3h3" stroke="#333" strokeWidth="1.300" />
          <g stroke="#a3a3a3" strokeWidth="1.200">
            <path d="M16 1.500h3l3 3v5a2 2 0 0 1-2 2h-4a1 1 0 0 1-1-1v-8zM19 1.500v3h3" />
            <path d="M26 1.500h3l3 3v5a2 2 0 0 1-2 2h-4a1 1 0 0 1-1-1v-8zM29 1.500v3h3" />
            <path d="M42 1.500l-3 3v5a2 2 0 0 0 2 2h5v-10zM47 1.500h3l3 3v5a2 2 0 0 1-2 2h-4zM50 1.500v3h3M42 1.500v3h-3" />
          </g>
        </svg>
      </div>
      <div className={`${cell} w-[143px] justify-center gap-[6px]`}>
        <button type="button" aria-label="Zoom out" className="h-[3px] w-[7px] bg-[#5a5a5a]" />
        <div className="relative flex w-[97px] items-center">
          <span className="absolute left-[27px] h-[7px] w-px bg-[#a0a0a0]" />
          <input
            type="range"
            aria-label="Zoom"
            value={zoom}
            onChange={(e) => setZoom(Number(e.target.value))}
            className="relative h-[3px] w-full appearance-none bg-[#a8a8a8] outline-none [&::-webkit-slider-thumb]:size-[9px] [&::-webkit-slider-thumb]:appearance-none [&::-webkit-slider-thumb]:rounded-full [&::-webkit-slider-thumb]:border [&::-webkit-slider-thumb]:border-[#555] [&::-webkit-slider-thumb]:bg-white"
          />
        </div>
        <button type="button" aria-label="Zoom in">
          <svg width="9" height="9" viewBox="0 0 9 9" stroke="#5a5a5a" strokeWidth="2.400" aria-hidden="true">
            <path d="M0 4.500h9M4.500 0v9" />
          </svg>
        </button>
      </div>
      <div className={`${cell} w-[48px] pl-[7px]`}>100%</div>
    </footer>
  );
}

const menus = ["File", "Edit", "View", "Insert", "Format", "Styles", "Table", "Form", "Tools", "Window", "Help"];

const windowButtons = [
  { name: "Minimize", d: "M2 9.500h8" },
  { name: "Restore", d: "M2.500 4.500h5v6h-5zM5 2.500h5v6" },
  { name: "Close", d: "M2 2.500l8 8M10 2.500l-8 8" },
];

export default function App() {
  return (
    <div className="flex h-screen flex-col overflow-hidden bg-[#fafafa] font-['Open_Sans','Noto_Sans',sans-serif]">
      <header className="grid h-[27px] shrink-0 grid-cols-3 items-center bg-[#131313] text-[15px] text-[#ececec]">
        <div className="flex items-center pl-[18px]">
          <button type="button">Activities</button>
          <button type="button" className="ml-9 flex items-center gap-2">
            <svg width="13" height="15" viewBox="0 0 13 15" aria-hidden="true">
              <path d="M1.500.5H9l3.500 3.500v10.500h-11z" fill="#f0f0f0" />
              <path d="M3.500 4.500H8M3.500 6.500h7M3.500 8.500h7M3.500 10.500h7M3.500 12.500h5" stroke="#333" />
            </svg>
            LibreOffice Writer
          </button>
        </div>
        <div className="flex items-center justify-center gap-[18px] pl-[102px]">
          <span className="text-[14px] whitespace-pre">Apr 22  02:07</span>
          <svg width="14" height="16" viewBox="0 0 14 16" fill="none" stroke="#e8e8e8" aria-hidden="true">
            <path d="M1 12.500h12M2.500 12.500C4 10 3.500 7 4 5c.6-2.500 5.400-2.500 6 0 .5 2 0 5 1.500 7.500M1.500 8c0-3 .5-5 2-6.500M12.500 8c0-3-.5-5-2-6.500" />
            <path d="M5 14h4l-2 1.800z" fill="#e8e8e8" stroke="none" />
            <path d="M6 1.500h2" />
          </svg>
        </div>
        <div className="flex items-center justify-end gap-[14px] pr-[19px]">
          <svg width="15" height="14" viewBox="0 0 15 14" fill="none" stroke="#ececec" aria-hidden="true">
            <path d="M0 4.500h3L7 .5v13l-4-4H0z" fill="#ececec" stroke="none" />
            <path d="M9 4.500c1.300 1.300 1.300 3.700 0 5M11.500 2.500c2.500 2.500 2.500 6.500 0 9" strokeWidth="1.300" />
          </svg>
          <svg width="13" height="14" viewBox="0 0 13 14" fill="none" stroke="#ececec" strokeWidth="1.300" aria-hidden="true">
            <path d="M6.500 0v7M3.500 2.300a5.500 5.500 0 1 0 6 0" />
          </svg>
        </div>
      </header>

      <div className="flex min-h-0 flex-1">
        <Dock />
        <main className="flex min-w-0 flex-1 flex-col">
          <div className="flex h-[37px] shrink-0 items-center border-b border-[#b9b9b9] bg-[#ebebeb] pr-[7px] pl-[97px]">
            <h1 className="flex-1 text-center text-[15px] font-bold text-[#3d3d3d]">Bubble_Sort_tutorial.docx - LibreOffice Writer</h1>
            <div className="flex gap-3">
              {windowButtons.map((b) => (
                <button key={b.name} type="button" aria-label={b.name} className="flex size-[22px] items-center justify-center rounded-full bg-[#dadada]">
                  <svg width="12" height="12" viewBox="0 0 12 12" fill="none" stroke="#3d3d3d" strokeWidth="1.200" aria-hidden="true">
                    <path d={b.d} />
                  </svg>
                </button>
              ))}
            </div>
          </div>

          <div className="flex h-[25px] shrink-0">
            <div className="flex flex-1 items-center border-b border-[#dcdcdc] text-[14px] text-[#3d3d3d]">
              {menus.map((m) => (
                <button key={m} type="button" className="px-[9px]">
                  {m}
                </button>
              ))}
            </div>
            <button type="button" aria-label="Close document" className="flex w-6 items-center justify-center pr-2">
              <svg width="9" height="9" viewBox="0 0 9 9" stroke="#3d3d3d" strokeWidth="1.500" aria-hidden="true">
                <path d="M.5.5l8 8M8.500.5l-8 8" />
              </svg>
            </button>
          </div>

          <div role="toolbar" aria-label="Standard" className="flex h-[39px] shrink-0 items-center pb-px pl-1">
            <Tool label="New" arrow><NewDoc /></Tool>
            <Tool label="Open" arrow><OpenDoc /></Tool>
            <Tool label="Save" arrow><SaveDoc /></Tool>
            <Sep />
            <Tool label="Export as PDF"><PdfDoc /></Tool>
            <Tool label="Print"><Printer /></Tool>
            <Tool label="Print Preview">
              <Printer>
                <circle cx="16.500" cy="16.500" r="4" fill="#f4f4f4" />
                <path d="M19.500 19.500l3 3" strokeWidth="1.800" />
              </Printer>
            </Tool>
            <Sep />
            <Tool label="Cut" disabled><Cut /></Tool>
            <Tool label="Copy" disabled><Copy /></Tool>
            <Tool label="Paste" arrow disabled><Paste /></Tool>
            <Sep />
            <Tool label="Clone Formatting"><CloneFormat /></Tool>
            <Sep />
            <Tool label="Undo" arrow disabled><Undo /></Tool>
            <Tool label="Redo" arrow disabled><Undo flip /></Tool>
            <Sep />
            <Tool label="Find and Replace"><Find /></Tool>
            <Tool label="Spelling"><Spelling /></Tool>
            <Tool label="Formatting Marks"><Pilcrow /></Tool>
            <Sep />
            <Tool label="Insert Table" arrow><TableIcon /></Tool>
            <Tool label="Insert Image"><ImageIcon /></Tool>
            <Tool label="Insert Chart"><ChartIcon /></Tool>
            <Tool label="Insert Text Box"><TextBoxIcon /></Tool>
            <Sep />
            <Tool label="Insert Page Break"><PageBreak /></Tool>
            <Tool label="Insert Field" arrow>
              <Sheet>
                <path d="M6 7.500h12M6 10.500h4M6 13.500h4M6 16.500h12" stroke="#000" />
                <path d="M11 10h7v4h-7z" fill={MAGENTA} stroke="none" />
              </Sheet>
            </Tool>
            <Tool label="Special Character" arrow>
              <Glyph>
                <text x="12" y="21" textAnchor="middle" fontSize="25" fontFamily="Open Sans" fontWeight="600" fill="#333" stroke="none">Ω</text>
              </Glyph>
            </Tool>
            <Sep />
            <Tool label="Insert Hyperlink"><LinkIcon /></Tool>
            <Tool label="Insert Footnote">
              <Sheet>
                <path d="M6 6.500h12M6 9h12M6 11.500h12M6 14h12" stroke="#000" />
                <path d="M6.500 15.500v3M8 17h10" stroke={SALMON} />
              </Sheet>
            </Tool>
            <Tool label="Insert Endnote"><Endnote /></Tool>
            <Tool label="Insert Bookmark"><Bookmark /></Tool>
            <Tool label="Insert Cross-reference">
              <Sheet>
                <path d="M11 7.500H6.500v9H11" stroke={SALMON} />
                <path d="M9 10h9M9 13.500h9" stroke="#555" />
              </Sheet>
            </Tool>
            <Sep />
            <Tool label="Insert Comment"><CommentIcon /></Tool>
            <Tool label="Track Changes">
              <Sheet>
                <path d="M6 7.500h5M14 7.500h4M6 13.500h4M13 16.500h5" stroke="#222" />
                <path d="M12 7.500h2M6 10.500h12M11 13.500h7M6 16.500h5" stroke="#d0213c" strokeDasharray="4 1" />
              </Sheet>
            </Tool>
            <Sep />
            <Tool label="Insert Line">
              <Glyph><rect x="3.500" y="11" width="17" height="2" fill="#fff" stroke="#666" /></Glyph>
            </Tool>
            <Tool label="Basic Shapes" arrow>
              <Glyph><path d="M12 3l9 9-9 9-9-9z" fill="#fff" stroke="#555" /></Glyph>
            </Tool>
            <Tool label="Draw Functions"><DrawBrush /></Tool>
          </div>

          <div role="toolbar" aria-label="Formatting" className="flex h-[39px] shrink-0 items-center pb-px pl-1">
            <Combo label="Paragraph Style" frame="w-[202px]" pad="pr-[44px]" split options={["Default Paragraph Style", "Heading 1", "Heading 2"]} />
            <Tool label="Update Style">
              <StyleBrush>
                <circle cx="18.500" cy="19" r="3.800" fill="#7d2a72" stroke="none" />
                <path d="M16.800 17.500l3.400 3" stroke="#fff" />
              </StyleBrush>
            </Tool>
            <Tool label="New Style">
              <StyleBrush>
                <circle cx="18.500" cy="19" r="3.800" fill="#43a318" stroke="none" />
                <path d="M16.500 19h4M18.500 17v4" stroke="#fff" />
              </StyleBrush>
            </Tool>
            <Sep />
            <Combo label="Font Name" frame="w-[220px]" pad="pr-9" options={["Liberation Serif", "Liberation Sans", "Liberation Mono"]} />
            <div className="w-[9px] shrink-0" />
            <Combo label="Font Size" frame="w-[100px]" pad="pr-9" options={["18 pt", "12 pt", "14 pt"]} />
            <Sep />
            <Tool label="Bold" active><Letter ch="B" cls="font-extrabold font-['Open_Sans']" /></Tool>
            <Tool label="Italic"><Letter ch="I" cls="italic font-bold font-['DejaVu_Sans_Mono']" /></Tool>
            <Tool label="Underline" arrow>
              <Glyph>
                <text x="12" y="17" textAnchor="middle" fontSize="19" fontFamily="Open Sans" fontWeight="600" fill="#2e2e2e" stroke="none">U</text>
                <path d="M5 21.500h14" />
              </Glyph>
            </Tool>
            <Tool label="Strikethrough">
              <Letter ch="S" cls="font-semibold font-['Open_Sans']"><path d="M4 12.500h16" /></Letter>
            </Tool>
            <Sep />
            <Tool label="Superscript">
              <Glyph>
                <text x="11" y="19" textAnchor="middle" fontSize="19" fontFamily="Open Sans" fontWeight="700" fill="#2e2e2e" stroke="none">A</text>
                <text x="21" y="8" textAnchor="middle" fontSize="9" fontFamily="Open Sans" fill={ORANGE} stroke="none">B</text>
              </Glyph>
            </Tool>
            <Tool label="Subscript">
              <Glyph>
                <text x="11" y="19" textAnchor="middle" fontSize="19" fontFamily="Open Sans" fontWeight="700" fill="#2e2e2e" stroke="none">A</text>
                <text x="21" y="22" textAnchor="middle" fontSize="9" fontFamily="Open Sans" fill={ORANGE} stroke="none">B</text>
              </Glyph>
            </Tool>
            <Sep />
            <Tool label="Clear Formatting">
              <Glyph>
                <text x="12" y="17" textAnchor="middle" fontSize="19" fontStyle="italic" fontFamily="Open Sans" fontWeight="700" fill="#2e2e2e" stroke="none">A</text>
                <path d="M4 20.500h10" />
                <circle cx="17.500" cy="19" r="3.800" fill="#c8203c" stroke="none" />
                <path d="M16 17.500l3 3m0-3l-3 3" stroke="#fff" />
              </Glyph>
            </Tool>
            <Sep />
            <Tool label="Font Color" arrow>
              <Glyph>
                <text x="12" y="16" textAnchor="middle" fontSize="19" fontFamily="Open Sans" fontWeight="700" fill="#2e2e2e" stroke="none">A</text>
                <rect x="0" y="18" width="24" height="6" fill="#c9211e" stroke="none" />
              </Glyph>
            </Tool>
            <Tool label="Highlighting" arrow>
              <Glyph>
                <text x="7" y="14" textAnchor="middle" fontSize="15" fontFamily="Open Sans" fontWeight="700" fill="#2e2e2e" stroke="none">A</text>
                <path d="M12 9l7-8 4 3.500-6.500 8z" fill="#fff" stroke="#777" />
                <path d="M12 9l4.500 3.500-3 3.500-5.500 1.500z" fill="#63b72e" stroke="#4c8f24" />
                <rect x="0" y="18" width="24" height="6" fill="#ff0" stroke="none" />
              </Glyph>
            </Tool>
            <Sep />
            <Tool label="Align Left" active><Lines rows={leftRows} /></Tool>
            <Tool label="Align Center"><Lines rows={centerRows} /></Tool>
            <Tool label="Align Right"><Lines rows={rightRows} /></Tool>
            <Tool label="Justified"><Lines rows={fullRows} /></Tool>
            <Sep />
            <Tool label="Unordered List" arrow><Bullets /></Tool>
            <Tool label="Ordered List" arrow><Numbers /></Tool>
            <Tool label="No List" active><NoList /></Tool>
            <Sep />
            <Tool label="Increase Indent"><Indent /></Tool>
            <Tool label="Decrease Indent"><Indent out /></Tool>
            <Sep />
            <Tool label="Line Spacing" arrow><LineSpacing /></Tool>
            <Tool label="Increase Paragraph Spacing"><ParaSpacing /></Tool>
            <Tool label="Decrease Paragraph Spacing" disabled><ParaSpacing dec /></Tool>
          </div>

          <div className="flex min-h-0 flex-1">
            <div className="flex min-w-0 flex-1 flex-col">
              <InfoBar text="Help us make LibreOffice even better!" action="Get involved" />
              <InfoBar text="Your donations support our worldwide community." action="Donate" />
              <div className="flex min-h-0 flex-1">
                <div className="flex min-w-0 flex-1 flex-col">
                  <div className="relative flex h-6 shrink-0 justify-center">
                    <span className="absolute top-2 left-2 size-[7px] border-b-2 border-l-2 border-[#9a9a9a]" />
                    <Ruler />
                  </div>
                  <Pages />
                </div>
                <div className="flex w-[13px] shrink-0 justify-center">
                  <div className="mt-[475px] h-[179px] w-[6px] rounded-full bg-[#8a8a8a]" />
                </div>
              </div>
            </div>
            <Sidebar />
          </div>

          <StatusBar />
        </main>
      </div>
    </div>
  );
}
